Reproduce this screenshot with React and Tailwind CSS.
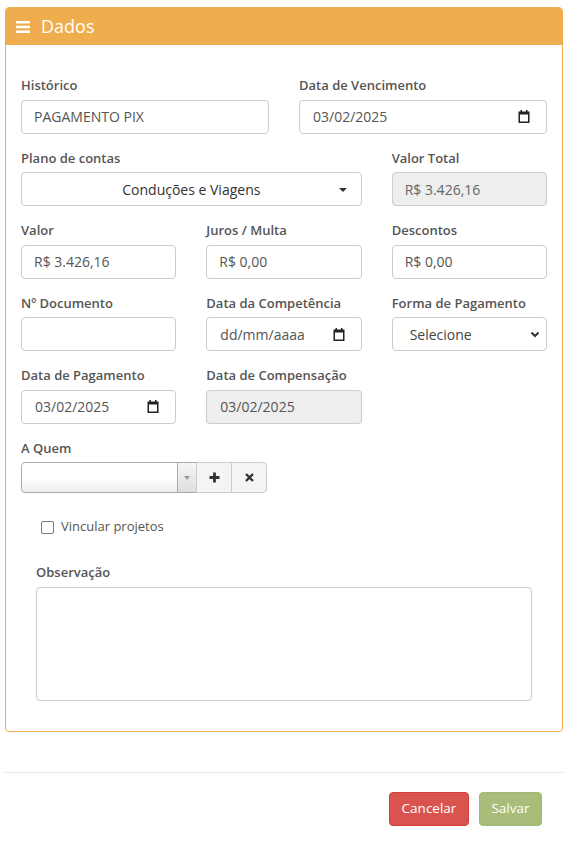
import React from 'react';

const font = { fontFamily: '"Open Sans", "Noto Sans", Arial, sans-serif' };

function CalendarIcon() {
  return (
    <svg width="12" height="13" viewBox="0 0 12 13" className="shrink-0">
      <path fillRule="evenodd" fill="#222" d="M0.5 1.5h11v11.5h-11z M2 4.5h8v7h-8z" />
      <rect x="2.5" y="0" width="1.5" height="2" fill="#222" />
      <rect x="8" y="0" width="1.5" height="2" fill="#222" />
    </svg>
  );
}

function Label({ children }) {
  return <label className="block text-[13px] leading-[18.5px] font-semibold text-[#555] mb-[5px]">{children}</label>;
}

function Field({ label, children, className = '' }) {
  return (
    <div className={`mb-[15px] ${className}`}>
      <Label>{label}</Label>
      {children}
    </div>
  );
}

function TextBox({ value = '', disabled }) {
  return (
    <div
      className={`h-[34px] rounded-[4px] border border-[#ccc] px-[12px] flex items-center text-[14px] text-[#555] ${
        disabled ? 'bg-[#eee] text-[#666]' : 'bg-white'
      }`}
    >
      {value}
    </div>
  );
}

function DateBox({ value, disabled }) {
  return (
    <div
      className={`h-[34px] rounded-[4px] border border-[#ccc] pl-[13px] pr-[16px] flex items-center justify-between text-[14px] text-[#555] ${
        disabled ? 'bg-[#eee]' : 'bg-white'
      }`}
    >
      <span>{value}</span>
      {!disabled && <CalendarIcon />}
    </div>
  );
}

export default function App() {
  return (
    <div style={font} className="w-[573px] min-h-[849px] bg-white pt-[7px]">
      <div className="ml-[5px] w-[558px] border border-[#f0ad4e] rounded-[4px]">
        <div className="h-[37px] bg-[#f0ad4e] rounded-t-[3px] flex items-center pl-[10px] gap-[11px] text-white">
          <svg width="14" height="12" viewBox="0 0 14 12">
            <rect x="0" y="0" width="14" height="2.4" rx="0.6" fill="#fff" />
            <rect x="0" y="4.8" width="14" height="2.4" rx="0.6" fill="#fff" />
            <rect x="0" y="9.6" width="14" height="2.4" rx="0.6" fill="#fff" />
          </svg>
          <span className="text-[18px] leading-none -mt-[2px]">Dados</span>
        </div>

        <div className="px-[15px] pt-[31px] pb-[15px]">
          <div className="grid grid-cols-2 gap-x-[30px]">
            <Field label="Histórico">
              <TextBox value="PAGAMENTO PIX" />
            </Field>
            <Field label="Data de Vencimento">
              <DateBox value="03/02/2025" />
            </Field>
          </div>

          <div className="grid grid-cols-3 gap-x-[30px]">
            <Field label="Plano de contas" className="col-span-2">
              <div className="h-[34px] rounded-[4px] border border-[#ccc] bg-white relative flex items-center justify-center text-[14px] text-[#333]">
                <span>Conduções e Viagens</span>
                <span className="absolute right-[14px] top-[15px] w-0 h-0 border-l-[4px] border-r-[4px] border-t-[4px] border-l-transparent border-r-transparent border-t-[#333]" />
              </div>
            </Field>
            <Field label="Valor Total">
              <TextBox value="R$ 3.426,16" disabled />
            </Field>
          </div>

          <div className="grid grid-cols-3 gap-x-[30px]">
            <Field label="Valor">
              <TextBox value="R$ 3.426,16" />
            </Field>
            <Field label="Juros / Multa">
              <TextBox value="R$ 0,00" />
            </Field>
            <Field label="Descontos">
              <TextBox value="R$ 0,00" />
            </Field>
          </div>

          <div className="grid grid-cols-3 gap-x-[30px]">
            <Field label="Nº Documento">
              <TextBox />
            </Field>
            <Field label="Data da Competência">
              <DateBox value="dd/mm/aaaa" />
            </Field>
            <Field label="Forma de Pagamento">
              <div className="h-[34px] rounded-[4px] border border-[#ccc] bg-white flex items-center justify-between pl-[17px] pr-[6px] text-[14px] text-[#444]">
                <span>Selecione</span>
                <svg width="10" height="7" viewBox="0 0 10 7">
                  <path d="M1.5 1.5l3.5 3.5 3.5-3.5" fill="none" stroke="#333" strokeWidth="2" />
                </svg>
              </div>
            </Field>
          </div>

          <div className="grid grid-cols-3 gap-x-[30px]">
            <Field label="Data de Pagamento">
              <DateBox value="03/02/2025" />
            </Field>
            <Field label="Data de Compensação">
              <DateBox value="03/02/2025" disabled />
            </Field>
          </div>

          <div className="grid grid-cols-2 gap-x-[30px]">
            <Field label="A Quem">
              <div className="flex h-[31px]">
                <div className="w-[176px] flex border border-[#aaa] rounded-l-[4px] bg-[linear-gradient(to_bottom,#ffffff_50%,#eeeeee_100%)]">
                  <div className="flex-1" />
                  <div className="w-[19px] border-l border-[#aaa] bg-[linear-gradient(to_bottom,#f5f5f5,#dedede)] flex items-center justify-center">
                    <span className="w-0 h-0 border-l-[3px] border-r-[3px] border-t-[4px] border-l-transparent border-r-transparent border-t-[#999]" />
                  </div>
                </div>
                <div className="w-[36px] -ml-px border border-[#ccc] bg-[#f4f4f4] flex items-center justify-center">
                  <svg width="11" height="11" viewBox="0 0 11 11">
                    <path d="M5.5 0.5v10M0.5 5.5h10" stroke="#333" strokeWidth="2.8" />
                  </svg>
                </div>
                <div className="w-[36px] -ml-px border border-[#ccc] bg-[#f4f4f4] rounded-r-[4px] flex items-center justify-center">
                  <svg width="9" height="9" viewBox="0 0 9 9">
                    <path d="M1 1l7 7M8 1l-7 7" stroke="#333" strokeWidth="2.4" />
                  </svg>
                </div>
              </div>
            </Field>
          </div>

          <div className="px-[15px]">
            <div className="mt-[9px] mb-[26px] h-[20px] flex items-center pl-[5px] gap-[7px] text-[13px] text-[#555]">
              <span className="w-[13px] h-[13px] border border-[#767676] rounded-[2px] bg-white" />
              <span>Vincular projetos</span>
            </div>
            <Field label="Observação">
              <div className="h-[114px] rounded-[4px] border border-[#ccc] bg-white" />
            </Field>
          </div>
        </div>
      </div>

      <div className="ml-[5px] w-[558px] mt-[40px] border-t border-[#e5e5e5] pt-[19px] pr-[21px] flex justify-end gap-[10px]">
        <button className="h-[34px] w-[80px] rounded-[4px] border border-[#d43f3a] bg-[#d9534f] text-white text-[13.5px]">
          Cancelar
        </button>
        <button className="h-[34px] w-[63px] rounded-[4px] border border-[#a0b872] bg-[#a7bd79] text-white text-[13.5px]">
          Salvar
        </button>
      </div>
    </div>
  );
}
